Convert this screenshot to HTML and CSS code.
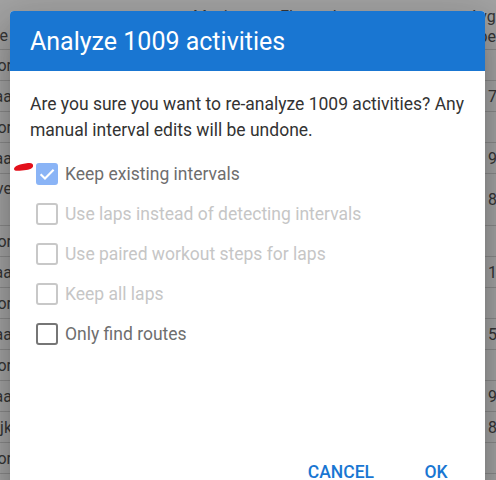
FILE: index.html
```html
<!DOCTYPE html>
<html>
<head>
<meta charset="utf-8">
<link rel="stylesheet" href="styles.css">
</head>
<body>
<div class="page">
<div class="table">
  <div class="row head"><div class="c1"><span>Name</span></div><div class="mid"><span class="h1">Moving</span><span class="h2">Elapsed</span></div><div class="c3"><span>Avg<br>Speed</span></div></div>
  <div class="row"><div class="c1"><span>Hardlopen door</span></div><div class="mid"></div><div class="c3">&nbsp;</div></div>
  <div class="row"><div class="c1"><span>Fietsen naar Maa</span></div><div class="mid"></div><div class="c3">7.1</div></div>
  <div class="row"><div class="c1"><span>Hardlopen door</span></div><div class="mid"></div><div class="c3">&nbsp;</div></div>
  <div class="row"><div class="c1"><span>Fietsen naar Maa</span></div><div class="mid"></div><div class="c3">9.2</div></div>
  <div class="row tall"><div class="c1"><span>Wandeling ove<br>Duinw</span></div><div class="mid"></div><div class="c3">8.4</div></div>
  <div class="row"><div class="c1"><span>Hardlopen door</span></div><div class="mid"></div><div class="c3">&nbsp;</div></div>
  <div class="row"><div class="c1"><span>Fietsen naar Maa</span></div><div class="mid"></div><div class="c3">11</div></div>
  <div class="row"><div class="c1"><span>Hardlopen door</span></div><div class="mid"></div><div class="c3">&nbsp;</div></div>
  <div class="row"><div class="c1"><span>Fietsen naar Maa</span></div><div class="mid"></div><div class="c3">5.5</div></div>
  <div class="row"><div class="c1"><span>Hardlopen door</span></div><div class="mid"></div><div class="c3">&nbsp;</div></div>
  <div class="row"><div class="c1"><span>Fietsen naar Maa</span></div><div class="mid"></div><div class="c3">9.0</div></div>
  <div class="row"><div class="c1"><span>Rondje Dijk</span></div><div class="mid"></div><div class="c3">8.3</div></div>
  <div class="row"><div class="c1"><span>Hardlopen door</span></div><div class="mid"></div><div class="c3">&nbsp;</div></div>
</div>

<div class="overlay">
  <div class="dialog">
    <div class="dialog-title">Analyze 1009 activities</div>
    <div class="dialog-body">
      <p class="msg">Are you sure you want to re-analyze 1009 activities? Any manual interval edits will be undone.</p>
      <div class="opts">
        <label class="opt checked"><span class="box"><svg viewBox="0 0 22 22" width="22" height="22"><path d="M4.6 11.2 L9 15.6 L17.6 6.8" fill="none" stroke="#fff" stroke-width="2.1"/></svg></span><span class="txt">Keep existing intervals</span></label>
        <label class="opt disabled"><span class="box"></span><span class="txt">Use laps instead of detecting intervals</span></label>
        <label class="opt disabled"><span class="box"></span><span class="txt">Use paired workout steps for laps</span></label>
        <label class="opt disabled"><span class="box"></span><span class="txt">Keep all laps</span></label>
        <label class="opt"><span class="box"></span><span class="txt">Only find routes</span></label>
      </div>
    </div>
    <div class="actions">
      <button class="btn cancel">CANCEL</button>
      <button class="btn ok">OK</button>
    </div>
  </div>
  <svg class="mark" width="24" height="14" viewBox="0 0 24 14"><path d="M2 9 C2 6 8 4 16 3 C20 2.5 21.6 4 21 6.5 C20.5 9 16 10 10 10.5 C5 11 2 11 2 9 Z" fill="#e3101b"/></svg>
</div>
</div>
</body>
</html>
```

FILE: styles.css
```css
* { box-sizing: border-box; }
html, body { margin: 0; padding: 0; }
body {
  background: #fff;
  font-family: Roboto, "Liberation Sans", sans-serif;
  color: #333;
}
.page {
  position: relative;
  width: 496px;
  height: 480px;
  overflow: hidden;
}
.table { display: flex; flex-direction: column; color: #555; }
.row {
  display: flex;
  height: 31px;
  border-bottom: 1px solid #d8d8d8;
  font-size: 16px;
  align-items: center;
}
.row.head { height: 50px; align-items: flex-start; padding-top: 7px; }
.row.tall { height: 52px; line-height: 22px; }
.c1 {
  width: 12px;
  overflow: hidden;
  display: flex;
  justify-content: flex-end;
  white-space: nowrap;
}
.row.head .c1 { padding-top: 19px; width: 8px; }
.mid { flex: 1; position: relative; font-size: 16px; line-height: 20px; }
.h1 { position: absolute; left: 185px; top: 0; }
.h2 { position: absolute; left: 272px; top: 0; }
.c3 { width: 10px; white-space: nowrap; overflow: visible; padding-left: 2px; }
.row.head .c3 { line-height: 20px; font-size: 16px; margin-left: -17px; width: 27px; padding-left: 0; }

.overlay {
  position: absolute;
  left: 0;
  top: 0;
  width: 496px;
  height: 480px;
  background: rgba(0, 0, 0, 0.36);
  padding: 11px 0 0 10px;
}
.dialog {
  width: 475px;
  height: 494px;
  background: #fff;
  border-radius: 4px;
  overflow: hidden;
  box-shadow: 0 11px 15px -7px rgba(0,0,0,.2), 0 24px 38px 3px rgba(0,0,0,.14), 0 9px 46px 8px rgba(0,0,0,.12);
}
.dialog-title {
  height: 60px;
  background: #1976d2;
  color: #fff;
  font-size: 25px;
  line-height: 60px;
  padding-left: 20px;
  padding-top: 1px;
}
.dialog-body { padding: 20px 20px 0 20px; height: 383px; }
.msg {
  margin: 0;
  font-size: 17.5px;
  line-height: 26px;
  color: #333;
}
.opts { margin-top: 11px; display: flex; flex-direction: column; }
.opt {
  height: 40px;
  display: flex;
  align-items: center;
  gap: 7px;
  padding-left: 6px;
  font-size: 17.5px;
  color: #6e6e6e;
}
.box {
  width: 22px;
  height: 22px;
  border: 2.5px solid #767676;
  border-radius: 3px;
  display: flex;
  align-items: center;
  justify-content: center;
  flex: none;
}
.opt.checked .box { background: #8ab4f6; border-color: #8ab4f6; }
.opt.checked .box svg { margin: -2.5px; flex: none; }
.opt.disabled { color: #c6c6c6; }
.opt.disabled .box { border-color: #c8c8c8; }
.actions {
  height: 51px;
  display: flex;
  justify-content: flex-end;
  align-items: flex-start;
  padding: 0 17px 0 0;
  gap: 14px;
}
.btn {
  font-family: Roboto, "Liberation Sans", sans-serif;
  font-weight: 500;
  font-size: 17.5px;
  color: #1976d2;
  background: none;
  border: none;
  height: 36px;
  padding: 0 16px;
  min-width: 64px;
}
.mark { position: absolute; left: 12px; top: 160px; }
```
